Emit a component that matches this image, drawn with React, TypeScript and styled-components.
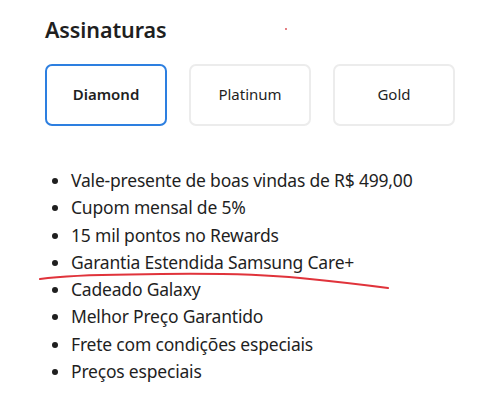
import React from 'react';
import styled, { createGlobalStyle } from 'styled-components';

const GlobalStyle = createGlobalStyle`
  html, body {
    margin: 0;
    padding: 0;
    background: #fff;
  }
  body {
    font-family: 'Noto Sans', 'Open Sans', sans-serif;
    color: #1f1f1f;
  }
`;

const Page = styled.div`
  position: relative;
  width: 500px;
  height: 404px;
  padding: 14px 0 0 45px;
  box-sizing: border-box;
  overflow: hidden;
`;

const Title = styled.h2`
  margin: 0;
  font-size: 21.5px;
  font-weight: 600;
  line-height: 32px;
  letter-spacing: -0.1px;
`;

const Tabs = styled.div`
  display: flex;
  gap: 22px;
  margin-top: 18px;
`;

const Tab = styled.button<{ $active?: boolean }>`
  width: 122px;
  height: 62px;
  box-sizing: border-box;
  background: #fff;
  border: 2px solid ${p => (p.$active ? '#2d7fe0' : '#ececec')};
  border-radius: 7px;
  font-family: 'Noto Sans', sans-serif;
  font-size: 15px;
  font-weight: ${p => (p.$active ? 600 : 400)};
  color: #1f1f1f;
  padding: 0 0 2px;
  cursor: pointer;
`;

const Benefits = styled.ul`
  margin: 41px 0 0;
  padding: 0 0 0 26px;
  list-style: disc;
`;

const Benefit = styled.li`
  font-size: 17.5px;
  letter-spacing: -0.2px;
  line-height: 27.3px;
  color: #1f1f1f;
`;

const Annotation = styled.svg`
  position: absolute;
  left: 0;
  top: 0;
  pointer-events: none;
`;

const benefits = [
  'Vale-presente de boas vindas de R$ 499,00',
  'Cupom mensal de 5%',
  '15 mil pontos no Rewards',
  'Garantia Estendida Samsung Care+',
  'Cadeado Galaxy',
  'Melhor Preço Garantido',
  'Frete com condições especiais',
  'Preços especiais',
];

const plans = ['Diamond', 'Platinum', 'Gold'];

export default function App() {
  return (
    <>
      <GlobalStyle />
      <Page>
        <Title>Assinaturas</Title>
        <Tabs>
          {plans.map((plan, i) => (
            <Tab key={plan} $active={i === 0}>
              {plan}
            </Tab>
          ))}
        </Tabs>
        <Benefits>
          {benefits.map(b => (
            <Benefit key={b}>{b}</Benefit>
          ))}
        </Benefits>
        <Annotation width="500" height="404" viewBox="0 0 500 404">
          <circle cx="286" cy="29" r="0.9" fill="#d9434a" />
          <path
            d="M40 279 Q 70 275 130 274.5 Q 240 272 300 278 Q 350 283 388 288"
            fill="none"
            stroke="#e0333b"
            strokeWidth="2"
            strokeLinecap="round"
          />
        </Annotation>
      </Page>
    </>
  );
}
